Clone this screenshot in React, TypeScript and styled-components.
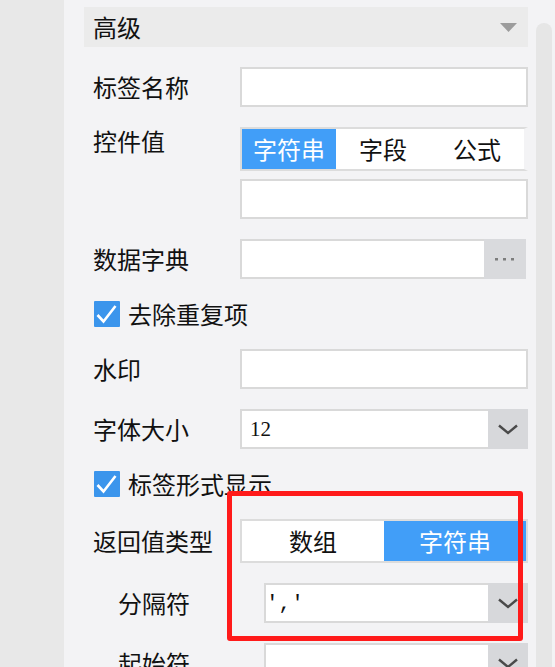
import React from 'react';
import styled, { createGlobalStyle } from 'styled-components';

const GlobalStyle = createGlobalStyle`
  html, body { margin: 0; padding: 0; height: 100%; overflow: hidden; }
  body {
    font-family: "Noto Sans CJK SC", "Noto Sans", sans-serif;
    background: #f3f3f5;
    color: #111;
  }
  * { box-sizing: border-box; }
`;

const Page = styled.div`
  position: relative;
  display: flex;
  width: 555px;
  height: 667px;
  overflow: hidden;
  background: #f3f3f5;
`;

const SideStrip = styled.div`
  flex: none;
  width: 64px;
  background: #e8e8e8;
`;

const Panel = styled.div`
  flex: 1;
  display: flex;
  padding: 7px 0 0 20px;
`;

const Content = styled.div`
  flex: none;
  width: 444px;
  display: flex;
  flex-direction: column;
`;

const ScrollTrack = styled.div`
  flex: none;
  width: 16px;
  margin: 16px 0 0 8px;
  border-radius: 8px 8px 0 0;
  background: #e6e6e6;
`;

const SectionHeader = styled.div`
  height: 40px;
  flex: none;
  display: flex;
  align-items: center;
  justify-content: space-between;
  padding: 0 11px 0 9px;
  background: #ebebeb;
  font-size: 24px;
  line-height: 28px;
`;

const Row = styled.div<{ $top?: boolean }>`
  flex: none;
  display: flex;
  align-items: ${(p) => (p.$top ? 'flex-start' : 'center')};
  margin-top: 20px;
`;

const Label = styled.div<{ $indent?: boolean }>`
  flex: none;
  width: ${(p) => (p.$indent ? 180 : 156)}px;
  padding-left: ${(p) => (p.$indent ? 34 : 9)}px;
  font-size: 24px;
  line-height: 28px;
  white-space: nowrap;
`;

const ControlStack = styled.div`
  flex: 1 0 auto;
  display: flex;
  flex-direction: column;
  gap: 8px;
`;

const TextInput = styled.div`
  flex: 1 0 auto;
  height: 40px;
  border: 2px solid #d9d9d9;
  background: #fff;
`;

const Segmented = styled.div<{ $openRight?: boolean }>`
  flex: 1 0 auto;
  display: flex;
  height: 44px;
  border: 2px solid #dcdcdc;
  border-right: ${(p) => (p.$openRight ? '4px solid #f3f3f5' : '2px solid #dcdcdc')};
  background: #fff;
`;

const Segment = styled.div<{ $active?: boolean }>`
  flex: 1;
  display: flex;
  align-items: center;
  justify-content: center;
  font-size: 24px;
  line-height: 28px;
  background: ${(p) => (p.$active ? '#419ef8' : 'transparent')};
  color: ${(p) => (p.$active ? '#fff' : '#111')};
`;

const ComboField = styled.div<{ $trimRight?: number }>`
  flex: 1 0 auto;
  display: flex;
  height: 40px;
  margin-right: ${(p) => p.$trimRight ?? 0}px;
`;

const ComboValue = styled.div<{ $mono?: boolean }>`
  flex: 1;
  display: flex;
  align-items: center;
  border: 2px solid #d9d9d9;
  border-right: none;
  background: #fff;
  padding-left: ${(p) => (p.$mono ? 0 : 8)}px;
  font-family: ${(p) => (p.$mono ? '"Liberation Mono", monospace' : '"Liberation Serif", serif')};
  font-size: 21px;
  color: #111;
`;

const ComboButton = styled.div<{ $width: number; $tone?: string }>`
  flex: none;
  width: ${(p) => p.$width}px;
  display: flex;
  align-items: center;
  justify-content: center;
  background: ${(p) => p.$tone ?? '#d7d8db'};
`;

const CheckRow = styled.label`
  flex: none;
  display: flex;
  align-items: center;
  gap: 8px;
  height: 30px;
  margin-top: 20px;
  padding-left: 10px;
  font-size: 24px;
  line-height: 28px;
`;

const CheckBox = styled.span`
  flex: none;
  width: 26px;
  height: 26px;
  border-radius: 1px;
  background: #3b95ec;
  display: flex;
  align-items: center;
  justify-content: center;
`;

const Annotation = styled.div`
  position: absolute;
  left: 227px;
  top: 491px;
  width: 296px;
  height: 150px;
  border: 5px solid #ff1a1a;
  border-radius: 3px;
  pointer-events: none;
`;

const Check = () => (
  <svg width="26" height="26" viewBox="0 0 26 26">
    <polyline points="3.5,14 9.5,20.5 21.5,5" fill="none" stroke="#fff" strokeWidth="2.6" />
  </svg>
);

const Chevron = () => (
  <svg width="20" height="11" viewBox="0 0 20 11">
    <polyline points="1,1.5 10,9 19,1.5" fill="none" stroke="#4a4a4a" strokeWidth="2.4" />
  </svg>
);

const Caret = () => (
  <svg width="17" height="9" viewBox="0 0 17 9">
    <polygon points="0,0 17,0 8.5,9" fill="#9c9c9c" />
  </svg>
);

const Dots = () => (
  <svg width="20" height="3" viewBox="0 0 20 3">
    <rect x="0" y="0" width="3" height="2.5" fill="#7d7d7d" />
    <rect x="8" y="0" width="3" height="2.5" fill="#7d7d7d" />
    <rect x="16" y="0" width="3" height="2.5" fill="#7d7d7d" />
  </svg>
);

export default function App() {
  return (
    <>
      <GlobalStyle />
      <Page>
        <SideStrip />
        <Panel>
          <Content>
            <SectionHeader>
              <span>高级</span>
              <Caret />
            </SectionHeader>

            <Row>
              <Label>标签名称</Label>
              <TextInput />
            </Row>

            <Row $top>
              <Label>控件值</Label>
              <ControlStack>
                <Segmented $openRight>
                  <Segment $active>字符串</Segment>
                  <Segment>字段</Segment>
                  <Segment>公式</Segment>
                </Segmented>
                <TextInput />
              </ControlStack>
            </Row>

            <Row>
              <Label>数据字典</Label>
              <ComboField $trimRight={2}>
                <ComboValue />
                <ComboButton $width={42} $tone="#d9dadd">
                  <Dots />
                </ComboButton>
              </ComboField>
            </Row>

            <CheckRow>
              <CheckBox>
                <Check />
              </CheckBox>
              去除重复项
            </CheckRow>

            <Row>
              <Label>水印</Label>
              <TextInput />
            </Row>

            <Row>
              <Label>字体大小</Label>
              <ComboField>
                <ComboValue>12</ComboValue>
                <ComboButton $width={40}>
                  <Chevron />
                </ComboButton>
              </ComboField>
            </Row>

            <CheckRow>
              <CheckBox>
                <Check />
              </CheckBox>
              标签形式显示
            </CheckRow>

            <Row>
              <Label>返回值类型</Label>
              <Segmented>
                <Segment>数组</Segment>
                <Segment $active>字符串</Segment>
              </Segmented>
            </Row>

            <Row>
              <Label $indent>分隔符</Label>
              <ComboField>
                <ComboValue $mono>','</ComboValue>
                <ComboButton $width={40}>
                  <Chevron />
                </ComboButton>
              </ComboField>
            </Row>

            <Row>
              <Label $indent>起始符</Label>
              <ComboField>
                <ComboValue $mono />
                <ComboButton $width={40}>
                  <Chevron />
                </ComboButton>
              </ComboField>
            </Row>
          </Content>
          <ScrollTrack />
        </Panel>
        <Annotation />
      </Page>
    </>
  );
}
